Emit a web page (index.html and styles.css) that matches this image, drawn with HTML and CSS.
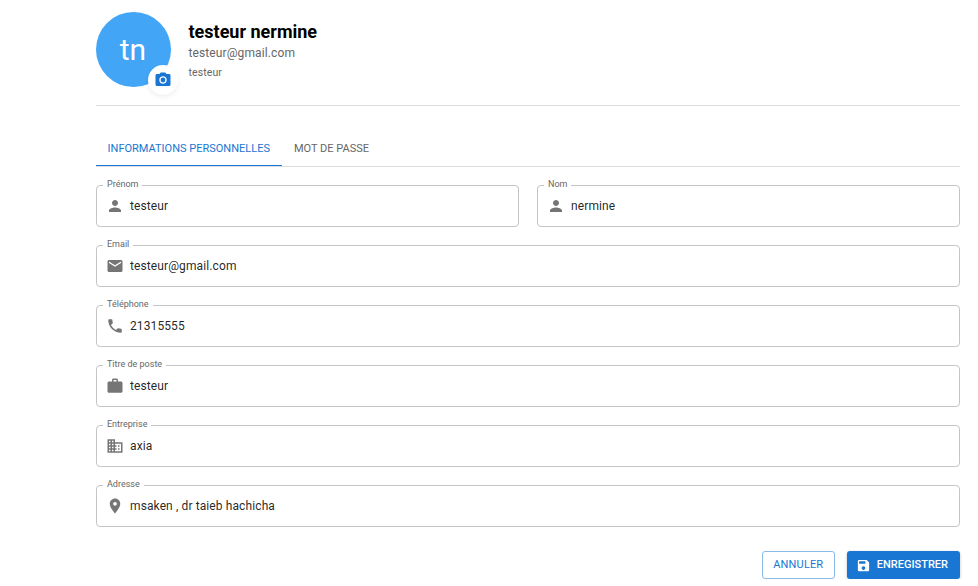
FILE: index.html
```html
<!DOCTYPE html>
<html lang="fr">
<head>
<meta charset="utf-8">
<title>Profil</title>
<link rel="stylesheet" href="styles.css">
</head>
<body>
<main class="profile">
  <header class="head">
    <div class="avatar">tn
      <span class="camera"><svg viewBox="0 0 24 24"><circle cx="12" cy="12" r="3.2"/><path d="M9 2 7.17 4H4c-1.1 0-2 .9-2 2v12c0 1.1.9 2 2 2h16c1.1 0 2-.9 2-2V6c0-1.1-.9-2-2-2h-3.17L15 2H9zm3 15c-2.76 0-5-2.24-5-5s2.24-5 5-5 5 2.24 5 5-2.24 5-5 5z"/></svg></span>
    </div>
    <div class="identity">
      <h1 class="name">testeur nermine</h1>
      <p class="mail">testeur@gmail.com</p>
      <p class="role">testeur</p>
    </div>
  </header>
  <nav class="tabs">
    <span class="tab active">INFORMATIONS PERSONNELLES</span>
    <span class="tab">MOT DE PASSE</span>
  </nav>
  <form class="form">
    <fieldset class="field half"><legend>Prénom</legend><svg viewBox="0 0 24 24"><path d="M12 12c2.21 0 4-1.79 4-4s-1.79-4-4-4-4 1.79-4 4 1.79 4 4 4zm0 2c-2.67 0-8 1.34-8 4v2h16v-2c0-2.66-5.33-4-8-4z"/></svg><span class="value">testeur</span></fieldset>
    <fieldset class="field half"><legend>Nom</legend><svg viewBox="0 0 24 24"><path d="M12 12c2.21 0 4-1.79 4-4s-1.79-4-4-4-4 1.79-4 4 1.79 4 4 4zm0 2c-2.67 0-8 1.34-8 4v2h16v-2c0-2.66-5.33-4-8-4z"/></svg><span class="value">nermine</span></fieldset>
    <fieldset class="field"><legend>Email</legend><svg viewBox="0 0 24 24"><path d="M20 4H4c-1.1 0-1.99.9-1.99 2L2 18c0 1.1.9 2 2 2h16c1.1 0 2-.9 2-2V6c0-1.1-.9-2-2-2zm0 4-8 5-8-5V6l8 5 8-5v2z"/></svg><span class="value">testeur@gmail.com</span></fieldset>
    <fieldset class="field"><legend>Téléphone</legend><svg viewBox="0 0 24 24"><path d="M6.62 10.79c1.44 2.83 3.76 5.14 6.59 6.59l2.2-2.2c.27-.27.67-.36 1.02-.24 1.12.37 2.33.57 3.57.57.55 0 1 .45 1 1V20c0 .55-.45 1-1 1-9.39 0-17-7.61-17-17 0-.55.45-1 1-1h3.5c.55 0 1 .45 1 1 0 1.25.2 2.45.57 3.57.11.35.03.74-.25 1.02l-2.2 2.2z"/></svg><span class="value">21315555</span></fieldset>
    <fieldset class="field"><legend>Titre de poste</legend><svg viewBox="0 0 24 24"><path d="M20 6h-4V4c0-1.11-.89-2-2-2h-4c-1.11 0-2 .89-2 2v2H4c-1.11 0-1.99.89-1.99 2L2 19c0 1.11.89 2 2 2h16c1.11 0 2-.89 2-2V8c0-1.11-.89-2-2-2zm-6 0h-4V4h4v2z"/></svg><span class="value">testeur</span></fieldset>
    <fieldset class="field"><legend>Entreprise</legend><svg viewBox="0 0 24 24"><path d="M12 7V3H2v18h20V7H12zM6 19H4v-2h2v2zm0-4H4v-2h2v2zm0-4H4V9h2v2zm0-4H4V5h2v2zm4 12H8v-2h2v2zm0-4H8v-2h2v2zm0-4H8V9h2v2zm0-4H8V5h2v2zm10 12h-8v-2h2v-2h-2v-2h2v-2h-2V9h8v10zm-2-8h-2v2h2v-2zm0 4h-2v2h2v-2z"/></svg><span class="value">axia</span></fieldset>
    <fieldset class="field"><legend>Adresse</legend><svg viewBox="0 0 24 24"><path d="M12 2C8.13 2 5 5.13 5 9c0 5.25 7 13 7 13s7-7.75 7-13c0-3.87-3.13-7-7-7zm0 9.5c-1.38 0-2.5-1.12-2.5-2.5s1.12-2.5 2.5-2.5 2.5 1.12 2.5 2.5-1.12 2.5-2.5 2.5z"/></svg><span class="value">msaken , dr taieb hachicha</span></fieldset>
  </form>
  <footer class="actions">
    <button class="btn outlined">ANNULER</button>
    <button class="btn contained"><svg viewBox="0 0 24 24"><path d="M17 3H5c-1.11 0-2 .9-2 2v14c0 1.1.89 2 2 2h14c1.1 0 2-.9 2-2V7l-4-4zm-5 16c-1.66 0-3-1.34-3-3s1.34-3 3-3 3 1.34 3 3-1.34 3-3 3zm3-10H5V5h10v4z"/></svg><span>ENREGISTRER</span></button>
  </footer>
</main>
</body>
</html>
```
FILE: styles.css
```css
* { box-sizing: border-box; }
body { margin: 0; background: #fff; font-family: Roboto, "Liberation Sans", sans-serif; color: rgba(0,0,0,.87); overflow: hidden; }
svg { display: block; fill: currentColor; flex: none; }
.profile { padding: 12px 18px 0 96px; }
.head { display: flex; height: 94px; border-bottom: 1px solid #dedede; }
.avatar { position: relative; width: 75px; height: 75px; padding-right: 1px; border-radius: 50%; background: #42a5f5; color: #fff; font-size: 30px; display: flex; align-items: center; justify-content: center; }
.camera { position: absolute; right: -7px; bottom: -8px; width: 30px; height: 30px; border-radius: 50%; background: #fff; color: #1976d2; display: flex; align-items: center; justify-content: center; box-shadow: 0 2px 5px rgba(0,0,0,.07); }
.camera svg { width: 18px; height: 18px; }
.identity { padding: 8px 0 0 17.5px; }
.name { margin: 0; font-size: 18px; line-height: 24px; font-weight: 700; color: #000; }
.mail { margin: 0; font-size: 12px; line-height: 18px; letter-spacing: .11px; color: #666; }
.role { margin: 2px 0 0; font-size: 10.5px; line-height: 17px; letter-spacing: .1px; color: #666; }
.tabs { display: flex; height: 36px; margin-top: 25px; border-bottom: 1px solid #dedede; }
.tab { height: 35px; padding: 0 12px 0 11.6px; font-size: 11px; line-height: 35px; color: #666; }
.tab + .tab { padding-left: 12px; }
.active { width: 186px; color: #1976d2; border-bottom: 1px solid #1976d2; white-space: nowrap; }
.form { display: grid; grid-template-columns: 1fr 1fr; gap: 13px 18px; margin-top: 13px; }
.field { grid-column: span 2; min-width: 0; height: 47px; margin: 0; padding: 0 10px 5px 6px; border: 1px solid #c4c4c4; border-radius: 4px; }
.half { grid-column: span 1; }
.field legend { height: 11px; padding: 0 4px; font-size: 9px; line-height: 9px; color: #666; }
.field svg { width: 18px; height: 18px; margin: 6px 0 0 3px; color: #757575; float: left; }
.value { float: left; margin: 6px 0 0 6px; font-size: 12px; line-height: 18px; letter-spacing: .11px; }
.actions { display: flex; justify-content: flex-end; gap: 12px; margin-top: 24px; }
.btn { height: 28px; padding: 0; font: 500 11px/26px Roboto, sans-serif; border-radius: 3px; display: flex; align-items: center; }
.outlined { width: 73px; justify-content: center; background: #fff; color: #1976d2; border: 1px solid #8cbae8; font-weight: 400; letter-spacing: .15px; }
.contained { background: #1976d2; color: #fff; border: 0; padding: 0 12px 0 9px; gap: 6px; box-shadow: 0 1px 3px rgba(0,0,0,.25); }
.contained svg { width: 15px; height: 15px; }
```
